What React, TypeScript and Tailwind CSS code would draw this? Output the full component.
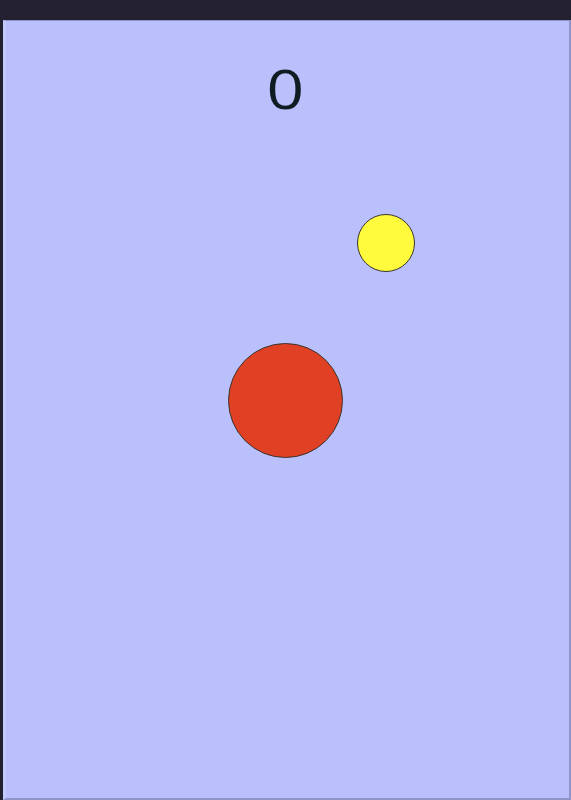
import React from "react";

type Ball = {
  id: string;
  x: number;
  y: number;
  size: number;
  color: string;
};

const BALLS: Ball[] = [
  { id: "target", x: 385.5, y: 243, size: 58, color: "bg-[#fffb3c]" },
  { id: "player", x: 285, y: 400, size: 115, color: "bg-[#e04124]" },
];

export default function App() {
  const score = 0;

  return (
    <div className="h-screen w-full bg-[#23202f] pt-[20px] pl-[3px] flex">
      <div className="flex-1 flex flex-col bg-[#b9c0fc] border-t border-t-[#8d92c6] border-l-[3px] border-l-[#c4c9fb] border-r-[2px] border-r-[#8e93c8] border-b-[2px] border-b-[#8e93c8]">
        {/* play area */}
        <div className="relative flex-1 flex flex-col">
          <div className="flex justify-center pr-[5px] pt-[35px]">
            <span
              className="inline-block text-[#0f1d22] text-[54px] leading-[64px] font-medium"
              style={{ fontFamily: '"Open Sans", sans-serif', transform: "scaleX(1.22)" }}
            >
              {score}
            </span>
          </div>

          {BALLS.map((b) => (
            <div
              key={b.id}
              className={`absolute rounded-full border border-[#3a3530] ${b.color}`}
              style={{
                width: b.size,
                height: b.size,
                left: b.x - 6 - b.size / 2,
                top: b.y - 21 - b.size / 2,
              }}
            />
          ))}
        </div>
      </div>
    </div>
  );
}
